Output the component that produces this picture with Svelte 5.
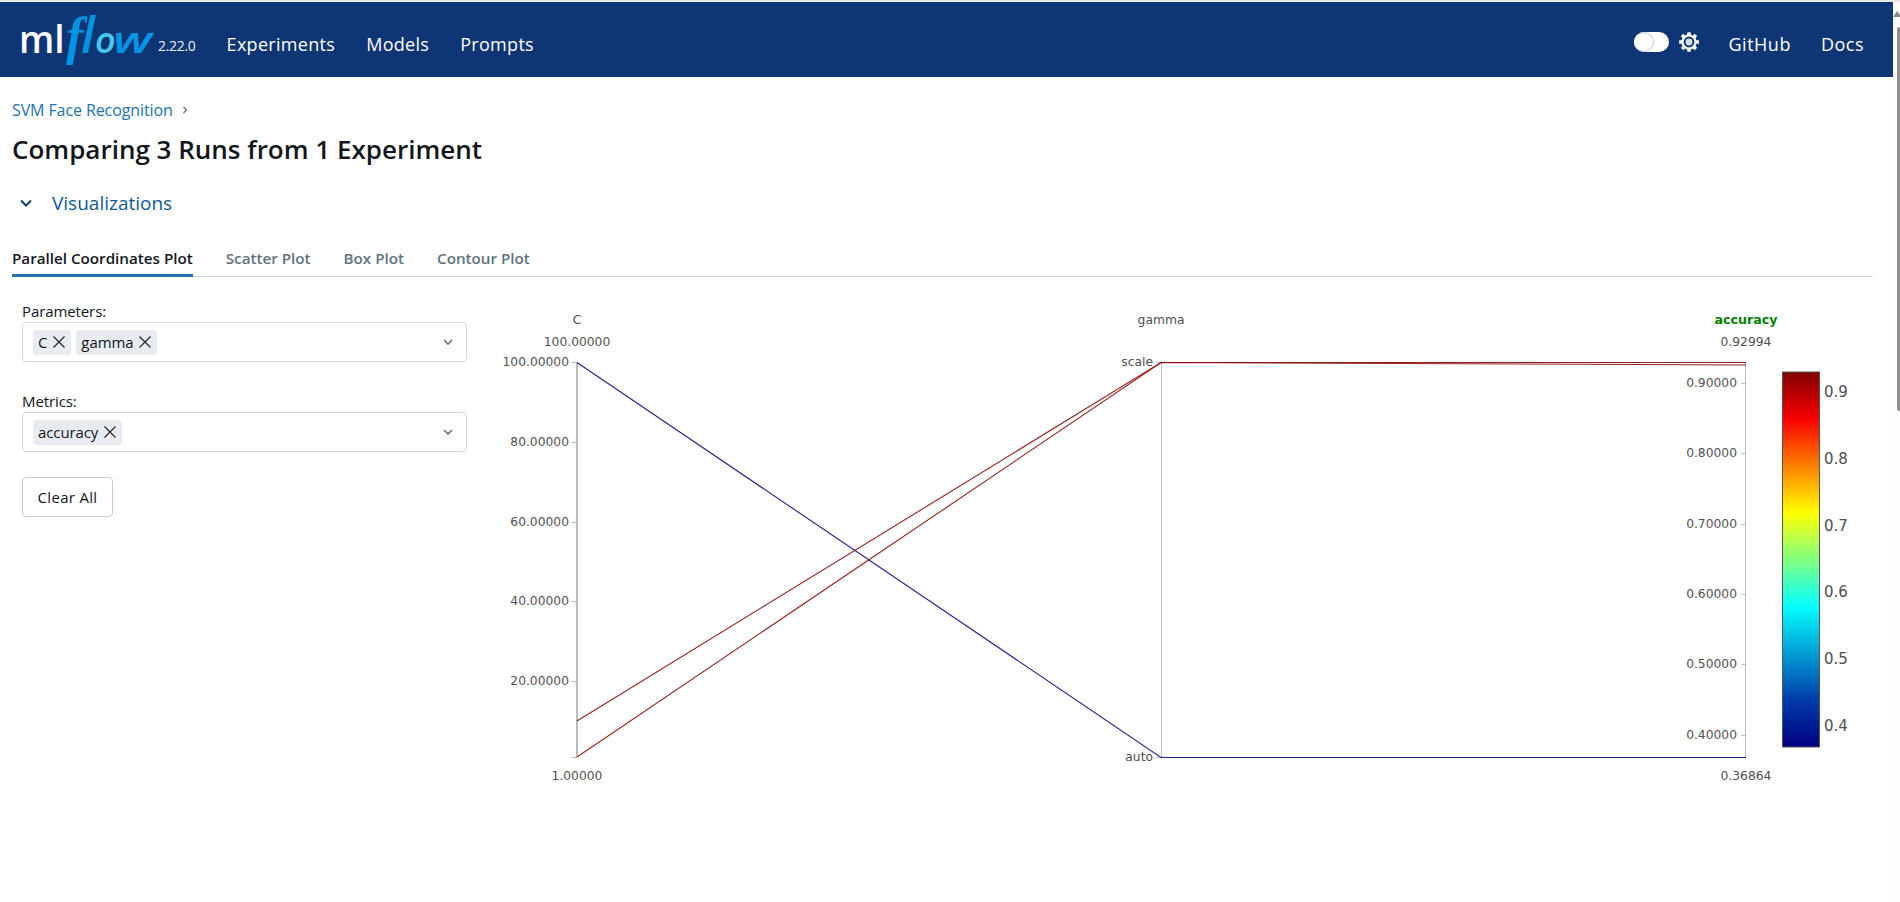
<script>
  const cTicks = [[362, '100.00000'], [442, '80.00000'], [522, '60.00000'], [601, '40.00000'], [681, '20.00000'], [757, '']];
  const accTicks = [[383, '0.90000'], [453, '0.80000'], [524, '0.70000'], [594, '0.60000'], [664, '0.50000'], [735, '0.40000']];
  const barTicks = [[392, '0.9'], [459, '0.8'], [526, '0.7'], [592, '0.6'], [659, '0.5'], [726, '0.4']];
  const runs = [
    { cls: 'blue', d: 'M577 362.5 L1161 757.5 L1746 757.5' },
    { cls: 'red', d: 'M577 721 L1161 362.5 L1746 362.5' },
    { cls: 'red', d: 'M577 757 L1161 362.5 L1746 365' }
  ];
  const navLeft = ['Experiments', 'Models', 'Prompts'];
  const tabs = ['Parallel Coordinates Plot', 'Scatter Plot', 'Box Plot', 'Contour Plot'];

  function gearPath(cx, cy, outer, inner, n) {
    const pts = [];
    for (let i = 0; i < n; i++) {
      const a = (i / n) * Math.PI * 2 - Math.PI / 2;
      const w = (Math.PI / n) * 0.42;
      const g = (Math.PI / n) * 0.62;
      [[a - w, outer], [a + w, outer], [a + g, inner], [a + Math.PI * 2 / n - g, inner]].forEach(([t, r]) => {
        pts.push((cx + r * Math.cos(t)).toFixed(2) + ' ' + (cy + r * Math.sin(t)).toFixed(2));
      });
    }
    return 'M' + pts.join('L') + 'Z';
  }
  const gear = gearPath(10, 10, 10, 7.6, 8);
</script>

<div class="shell">
  <div class="band"></div>
  <div class="frame">
    <div class="page">
      <header class="nav">
        <svg class="logo" width="158" height="75" viewBox="0 0 158 75" aria-label="MLflow">
          <text class="l-ml" x="19" y="51">ml</text>
          <text class="l-f" x="66" y="52">f</text>
          <text class="l-l" x="81" y="51">l</text>
          <text class="l-o" x="95" y="51">o</text>
          <text class="l-w" x="113" y="51" textLength="39" lengthAdjust="spacingAndGlyphs">w</text>
        </svg>
        <span class="version">2.22.0</span>
        <nav class="links">
          {#each navLeft as n}<span>{n}</span>{/each}
        </nav>
        <div class="right">
          <span class="toggle"><span class="knob"></span></span>
          <svg class="gear" width="20" height="20" viewBox="0 0 20 20">
            <path class="gear-body" d={gear} />
            <circle class="gear-ring" cx="10" cy="10" r="4.4" />
          </svg>
          <span class="gh">GitHub</span>
          <span class="docs">Docs</span>
        </div>
      </header>

      <main class="content">
        <div class="crumb">
          <span class="crumb-link">SVM Face Recognition</span>
          <svg class="crumb-sep" width="8" height="10" viewBox="0 0 8 10"><path d="M2.5 2 L5.5 5 L2.5 8" /></svg>
        </div>
        <h1>Comparing 3 Runs from 1 Experiment</h1>
        <div class="section">
          <svg class="sec-chev" width="14" height="10" viewBox="0 0 14 10"><path d="M2 2.5 L7 7.5 L12 2.5" /></svg>
          <span>Visualizations</span>
        </div>
        <div class="tabs">
          {#each tabs as t, i}
            <span class="tab" class:active={i === 0}>{t}</span>
          {/each}
        </div>

        <div class="body">
          <aside class="controls">
            <div class="label">Parameters:</div>
            <div class="select">
              <span class="tag">C <svg class="x" width="14" height="14" viewBox="0 0 14 14"><path d="M1.5 1.5 L12.5 12.5 M12.5 1.5 L1.5 12.5" /></svg></span>
              <span class="tag">gamma <svg class="x" width="14" height="14" viewBox="0 0 14 14"><path d="M1.5 1.5 L12.5 12.5 M12.5 1.5 L1.5 12.5" /></svg></span>
              <svg class="chev" width="12" height="8" viewBox="0 0 12 8"><path d="M2 2 L6 6 L10 2" /></svg>
            </div>
            <div class="label second">Metrics:</div>
            <div class="select">
              <span class="tag">accuracy <svg class="x" width="14" height="14" viewBox="0 0 14 14"><path d="M1.5 1.5 L12.5 12.5 M12.5 1.5 L1.5 12.5" /></svg></span>
              <svg class="chev" width="12" height="8" viewBox="0 0 12 8"><path d="M2 2 L6 6 L10 2" /></svg>
            </div>
            <button class="clear">Clear All</button>
          </aside>

          <svg class="plot" width="1393" height="510" viewBox="500 300 1393 510">
            <defs>
              <linearGradient id="jet" x1="0" y1="1" x2="0" y2="0">
                <stop offset="0" stop-color="rgb(0,0,131)" />
                <stop offset="0.125" stop-color="rgb(0,60,170)" />
                <stop offset="0.375" stop-color="rgb(5,255,255)" />
                <stop offset="0.625" stop-color="rgb(255,255,0)" />
                <stop offset="0.875" stop-color="rgb(250,0,0)" />
                <stop offset="1" stop-color="rgb(128,0,0)" />
              </linearGradient>
            </defs>

            <rect class="axis" x="576" y="362" width="2" height="395" />
            <rect class="axis" x="1161" y="362" width="1" height="395" />
            <rect class="axis" x="1745" y="362" width="1" height="395" />

            {#each cTicks as [y, t]}
              <line class="tick" x1="572" x2="577" y1={y + 0.5} y2={y + 0.5} />
              <text class="t end" x="569" y={y + 4}>{t}</text>
            {/each}
            <line class="tick" x1="1156" x2="1161" y1="362.5" y2="362.5" />
            <line class="tick" x1="1156" x2="1161" y1="757.5" y2="757.5" />
            <text class="t end" x="1153" y="366">scale</text>
            <text class="t end" x="1153" y="761">auto</text>
            {#each accTicks as [y, t]}
              <line class="tick" x1="1741" x2="1746" y1={y + 0.5} y2={y + 0.5} />
              <text class="t end" x="1737" y={y + 4}>{t}</text>
            {/each}

            {#each runs as r}
              <path class="run {r.cls}" d={r.d} />
            {/each}

            <text class="t mid" x="577" y="324">C</text>
            <text class="t mid" x="577" y="346">100.00000</text>
            <text class="t mid" x="577" y="780">1.00000</text>
            <text class="t mid" x="1161" y="324">gamma</text>
            <text class="t mid acc" x="1746" y="324">accuracy</text>
            <text class="t mid" x="1746" y="346">0.92994</text>
            <text class="t mid" x="1746" y="780">0.36864</text>

            <rect class="bar" x="1782.5" y="372" width="37" height="375" fill="url(#jet)" />
            {#each barTicks as [y, t]}
              <text class="bt" x="1824" y={y + 5}>{t}</text>
            {/each}
          </svg>
        </div>
      </main>
    </div>
    <div class="scrollbar">
      <svg class="sb-arrow" width="7" height="8" viewBox="0 0 7 8"><path d="M0 7 L4 1 L7 5 L7 7 Z" /></svg>
      <div class="sb-thumb"></div>
    </div>
  </div>
</div>

<style>
  :global(body) {
    margin: 0;
    background: #fff;
    overflow: hidden;
  }
  .shell {
    width: 1900px;
    height: 902px;
    overflow: hidden;
    font-family: "Open Sans", "Noto Sans", sans-serif;
    color: #11171c;
    display: flex;
    flex-direction: column;
  }
  .band {
    height: 2px;
    background: #e6e6e6;
    flex: none;
  }
  .frame {
    display: flex;
    flex: 1;
    min-height: 0;
  }
  .page {
    width: 1893px;
    flex: none;
  }
  .scrollbar {
    width: 7px;
    background: #fdfdfd;
    position: relative;
  }
  .sb-arrow {
    display: block;
    margin-top: 8px;
    fill: #8a8a8a;
  }
  .sb-thumb {
    margin: 9px 0 0 4px;
    width: 3px;
    height: 384px;
    background: #8f8f8f;
    border-radius: 2px 0 0 2px;
  }
  .nav {
    height: 75px;
    box-sizing: border-box;
    padding-top: 4px;
    background: #0e3574;
    display: flex;
    align-items: center;
    color: #fff;
  }
  .logo {
    flex: none;
    display: block;
    align-self: flex-start;
    margin-top: -4px;
  }
  .l-ml {
    font-family: "Open Sans", sans-serif;
    font-weight: 600;
    font-size: 37px;
    fill: #fff;
  }
  .l-f {
    font-family: "Liberation Serif", serif;
    font-style: italic;
    font-weight: 700;
    font-size: 52px;
    fill: #0194e2;
  }
  .l-l {
    font-family: "Open Sans", sans-serif;
    font-style: italic;
    font-weight: 600;
    font-size: 50px;
    fill: #0194e2;
  }
  .l-o {
    font-family: "Open Sans", sans-serif;
    font-style: italic;
    font-weight: 600;
    font-size: 36px;
    fill: #43c9ed;
  }
  .l-w {
    font-family: "Open Sans", sans-serif;
    font-style: italic;
    font-weight: 600;
    font-size: 36px;
    fill: #0194e2;
  }
  .version {
    font-size: 14px;
    letter-spacing: -0.3px;
    margin: 8px 0 0 0;
    color: #e8eef6;
  }
  .links {
    display: flex;
    gap: 31px;
    margin: 4px 0 0 31px;
    font-size: 18px;
    letter-spacing: 0.3px;
  }
  .right {
    margin-left: auto;
    display: flex;
    align-items: center;
    font-size: 18px;
    letter-spacing: 0.5px;
    padding-right: 29px;
  }
  .toggle {
    width: 35px;
    height: 20px;
    border-radius: 10px;
    background: #fff;
    display: block;
    position: relative;
  }
  .knob {
    position: absolute;
    left: 0;
    top: 0;
    width: 20px;
    height: 20px;
    border-radius: 50%;
    box-sizing: border-box;
    background: #fff;
    border: 1px solid #c3d0e0;
    border-left-color: #fff;
  }
  .gear {
    margin-left: 10px;
    display: block;
  }
  .gear-body {
    fill: #fff;
  }
  .gear-ring {
    fill: #d6dfec;
    stroke: #0e3574;
    stroke-width: 2;
  }
  .gh {
    margin: 4px 0 0 30px;
  }
  .docs {
    margin: 4px 0 0 30px;
  }
  .content {
    padding: 0 20px 0 12px;
  }
  .crumb {
    display: flex;
    align-items: center;
    height: 20px;
    margin-top: 23px;
    font-size: 16px;
    letter-spacing: -0.1px;
    color: #2272b4;
  }
  .crumb-sep {
    margin-left: 8px;
    fill: none;
    stroke: #5f7281;
    stroke-width: 1.3;
  }
  h1 {
    margin: 13px 0 0;
    font-size: 26px;
    line-height: 32px;
    font-weight: 600;
    color: #11171c;
  }
  .section {
    display: flex;
    align-items: center;
    margin-top: 25px;
    height: 26px;
    font-size: 19px;
    color: #0e5a94;
  }
  .sec-chev {
    margin: 0 19px 0 7px;
    fill: none;
    stroke: #0e3f70;
    stroke-width: 2;
  }
  .tabs {
    display: flex;
    gap: 33px;
    margin-top: 28px;
    height: 33px;
    box-sizing: border-box;
    border-bottom: 1px solid #d1d9e1;
    font-size: 15.2px;
    font-weight: 600;
    color: #5f7281;
  }
  .tab {
    height: 33px;
    box-sizing: border-box;
    padding-top: 4px;
    line-height: 20px;
  }
  .tab.active {
    color: #11171c;
    border-bottom: 3px solid #2272b4;
  }
  .body {
    display: flex;
    align-items: flex-start;
  }
  .controls {
    width: 445px;
    margin: 0 0 0 10px;
    padding-top: 24px;
    flex: none;
    font-size: 15px;
    letter-spacing: -0.1px;
  }
  .label {
    height: 20px;
    line-height: 20px;
    margin-bottom: 1px;
  }
  .label.second {
    margin-top: 29px;
  }
  .select {
    height: 40px;
    box-sizing: border-box;
    border: 1px solid #d1d9e1;
    border-radius: 4px;
    display: flex;
    align-items: center;
    padding-left: 10px;
    gap: 5px;
    position: relative;
  }
  .tag {
    height: 25px;
    display: flex;
    align-items: center;
    gap: 5px;
    padding: 0 5px;
    border-radius: 4px;
    background: #e8ecf0;
    line-height: 25px;
  }
  .x {
    fill: none;
    stroke: #1f272d;
    stroke-width: 1.2;
  }
  .chev {
    margin-left: auto;
    margin-right: 12px;
    fill: none;
    stroke: #5f7281;
    stroke-width: 1.6;
  }
  .clear {
    display: block;
    margin-top: 25px;
    width: 91px;
    height: 40px;
    box-sizing: border-box;
    border: 1px solid #c0cdd8;
    border-radius: 4px;
    background: #fff;
    font: inherit;
    color: #11171c;
    letter-spacing: 0.3px;
    padding: 0;
  }
  .plot {
    flex: none;
    display: block;
    margin-left: 33px;
    margin-top: 23px;
  }
  .axis {
    fill: #bbb;
  }
  .tick {
    stroke: #bbb;
    stroke-width: 1;
  }
  .t {
    font-family: "DejaVu Sans", sans-serif;
    font-size: 12.3px;
    fill: #505050;
  }
  .end {
    text-anchor: end;
  }
  .mid {
    text-anchor: middle;
  }
  .acc {
    font-weight: 700;
    font-size: 12.7px;
    fill: #008000;
  }
  .run {
    fill: none;
    stroke-width: 1.1;
  }
  .red {
    stroke: #8a0a0a;
    stroke-opacity: 0.9;
  }
  .blue {
    stroke: #14148a;
    stroke-opacity: 0.95;
  }
  .bar {
    stroke: #555;
    stroke-width: 1;
  }
  .bt {
    font-family: "DejaVu Sans", sans-serif;
    font-size: 15px;
    fill: #505050;
  }
</style>
